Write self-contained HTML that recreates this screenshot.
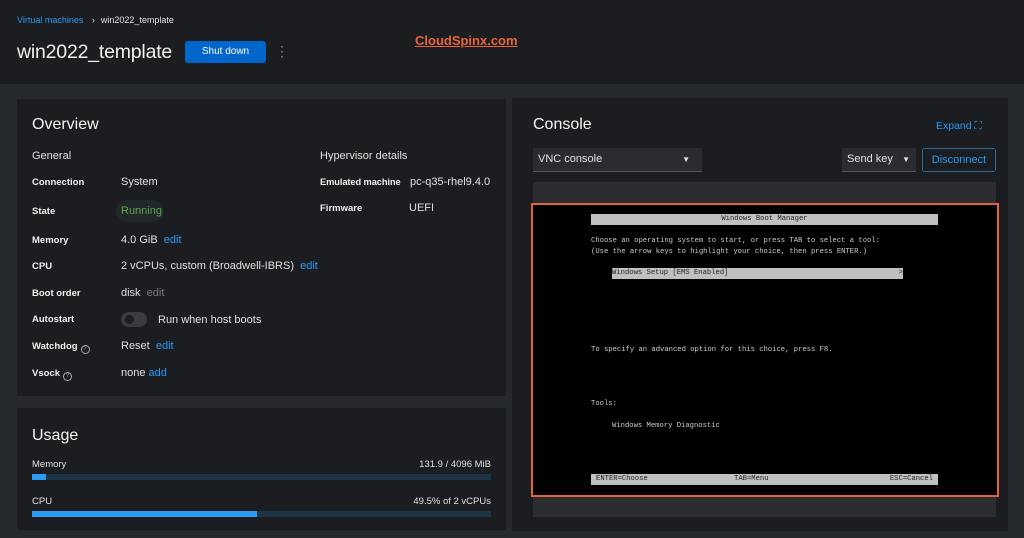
<!DOCTYPE html>
<html><head><style>
*{margin:0;padding:0;box-sizing:border-box}
body{width:1024px;height:538px;overflow:hidden;background:#25282c;font-family:"Liberation Sans",sans-serif;color:#e0e0e0;position:relative}
.a{position:absolute;white-space:nowrap}
.hdr{left:0;top:0;width:1024px;height:84px;background:#1b1d21}
.card{background:#1b1d21}
.lbl{font-size:9.5px;font-weight:bold;color:#f0f0f0}
.val{font-size:11px;color:#e0e0e0}
.lnk{color:#2b9af3}
.mono{font-family:"Liberation Mono",monospace;font-size:7.2px;color:#ccc}
.q{display:inline-block;width:9px;height:9px;border:1px solid #aaa;border-radius:50%;font-size:6px;text-align:center;line-height:7px;color:#aaa;vertical-align:-1px;margin-left:3px;font-weight:normal}
</style></head><body>
<div class="a hdr"></div>
<div class="a" style="left:17px;top:15px;font-size:9px;color:#2b9af3">Virtual machines <span style="color:#ddd;margin:0 6px">›</span><span style="color:#e0e0e0">win2022_template</span></div>
<div class="a" style="left:17px;top:41px;font-size:19.5px;letter-spacing:-0.2px;color:#f0f0f0">win2022_template</div>
<div class="a" style="left:185px;top:41px;width:81px;height:22px;background:#0066cc;border-radius:3px;font-size:10px;color:#fff;text-align:center;line-height:22px">Shut down</div>
<div class="a" style="left:280px;top:44px;font-size:12px;color:#bbb;line-height:5px">·<br>·<br>·</div>
<div class="a" style="left:415px;top:33px;font-size:13px;font-weight:bold;color:#e8643c;text-decoration:underline">CloudSpinx.com</div>

<div class="a card" style="left:17px;top:99px;width:489px;height:297px"></div>
<div class="a" style="left:32px;top:116px;font-size:16px;color:#f5f5f5">Overview</div>
<div class="a val" style="left:32px;top:150px">General</div>
<div class="a val" style="left:320px;top:150px">Hypervisor details</div>
<div class="a lbl" style="left:32px;top:177px">Connection</div><div class="a val" style="left:121px;top:176px">System</div>
<div class="a lbl" style="left:320px;top:177px;font-size:9.3px;letter-spacing:-0.1px">Emulated machine</div><div class="a val" style="left:410px;top:176px">pc-q35-rhel9.4.0</div>
<div class="a lbl" style="left:32px;top:206px">State</div>
<div class="a" style="left:116px;top:200px;width:48px;height:22px;background:#22272a;border-radius:11px"></div>
<div class="a val" style="left:121px;top:205px;color:#5ba352">Running</div>
<div class="a lbl" style="left:320px;top:203px">Firmware</div><div class="a val" style="left:409px;top:202px">UEFI</div>
<div class="a lbl" style="left:32px;top:235px">Memory</div><div class="a val" style="left:121px;top:234px">4.0 GiB <span class="lnk">&nbsp;edit</span></div>
<div class="a lbl" style="left:32px;top:261px">CPU</div><div class="a val" style="left:121px;top:260px">2 vCPUs, custom (Broadwell-IBRS) <span class="lnk">&nbsp;edit</span></div>
<div class="a lbl" style="left:32px;top:288px">Boot order</div><div class="a val" style="left:121px;top:287px">disk <span style="color:#777">&nbsp;edit</span></div>
<div class="a lbl" style="left:32px;top:314px">Autostart</div>
<div class="a" style="left:121px;top:312px;width:26px;height:15px;background:#3a3c40;border-radius:8px"><div style="position:absolute;left:4px;top:3px;width:9px;height:9px;border-radius:50%;background:#1b1d21"></div></div>
<div class="a val" style="left:158px;top:314px">Run when host boots</div>
<div class="a lbl" style="left:32px;top:341px">Watchdog<span class="q">?</span></div><div class="a val" style="left:121px;top:340px">Reset <span class="lnk">&nbsp;edit</span></div>
<div class="a lbl" style="left:32px;top:368px">Vsock<span class="q">?</span></div><div class="a val" style="left:121px;top:367px">none <span class="lnk">add</span></div>

<div class="a card" style="left:17px;top:408px;width:489px;height:122px"></div>
<div class="a" style="left:32px;top:427px;font-size:16px;color:#f5f5f5">Usage</div>
<div class="a val" style="left:32px;top:459px;font-size:9.5px">Memory</div>
<div class="a val" style="right:533px;top:459px;font-size:9.5px">131.9 / 4096 MiB</div>
<div class="a" style="left:32px;top:474px;width:459px;height:6px;background:#1d3446"><div style="width:14px;height:6px;background:#2b9af3"></div></div>
<div class="a val" style="left:32px;top:496px;font-size:9.5px">CPU</div>
<div class="a val" style="right:533px;top:496px;font-size:9.5px">49.5% of 2 vCPUs</div>
<div class="a" style="left:32px;top:511px;width:459px;height:6px;background:#1d3446"><div style="width:225px;height:6px;background:#2b9af3"></div></div>

<div class="a card" style="left:512px;top:98px;width:496px;height:433px"></div>
<div class="a" style="left:533px;top:116px;font-size:16px;color:#f5f5f5">Console</div>
<div class="a" style="left:936px;top:120px;font-size:10.5px;color:#2b9af3">Expand ⛶</div>
<div class="a" style="left:533px;top:148px;width:169px;height:24px;background:#2a2c30;border-bottom:1px solid #555;font-size:11px;line-height:23px;padding-left:5px">VNC console<span style="position:absolute;right:12px;font-size:8px">▼</span></div>
<div class="a" style="left:842px;top:148px;width:74px;height:24px;background:#2a2c30;border-bottom:1px solid #555;font-size:11px;line-height:23px;padding-left:5px">Send key<span style="position:absolute;right:6px;font-size:8px">▼</span></div>
<div class="a" style="left:922px;top:148px;width:74px;height:24px;border:1px solid #2b6a9a;border-radius:3px;font-size:11px;color:#2b9af3;text-align:center;line-height:22px">Disconnect</div>
<div class="a" style="left:533px;top:182px;width:463px;height:335px;background:#2b2d30"></div>
<div class="a" style="left:531px;top:203px;width:468px;height:294px;background:#000;border:2px solid #e0633e"></div>
<div class="a mono" style="left:591px;top:214px;width:347px;height:11px;background:#c0c0c0;color:#222;text-align:center;line-height:11px">Windows Boot Manager</div>
<div class="a mono" style="left:591px;top:237px">Choose an operating system to start, or press TAB to select a tool:</div>
<div class="a mono" style="left:591px;top:248px">(Use the arrow keys to highlight your choice, then press ENTER.)</div>
<div class="a mono" style="left:612px;top:268px;width:291px;height:11px;background:#c0c0c0;color:#222;line-height:11px">Windows Setup [EMS Enabled]<span style="float:right">&gt;</span></div>
<div class="a mono" style="left:591px;top:346px">To specify an advanced option for this choice, press F8.</div>
<div class="a mono" style="left:591px;top:400px">Tools:</div>
<div class="a mono" style="left:612px;top:422px">Windows Memory Diagnostic</div>
<div class="a mono" style="left:591px;top:474px;width:347px;height:11px;background:#c0c0c0;color:#222;line-height:11px;padding:0 5px">ENTER=Choose<span style="position:absolute;left:143px">TAB=Menu</span><span style="float:right">ESC=Cancel</span></div>
</body></html>
